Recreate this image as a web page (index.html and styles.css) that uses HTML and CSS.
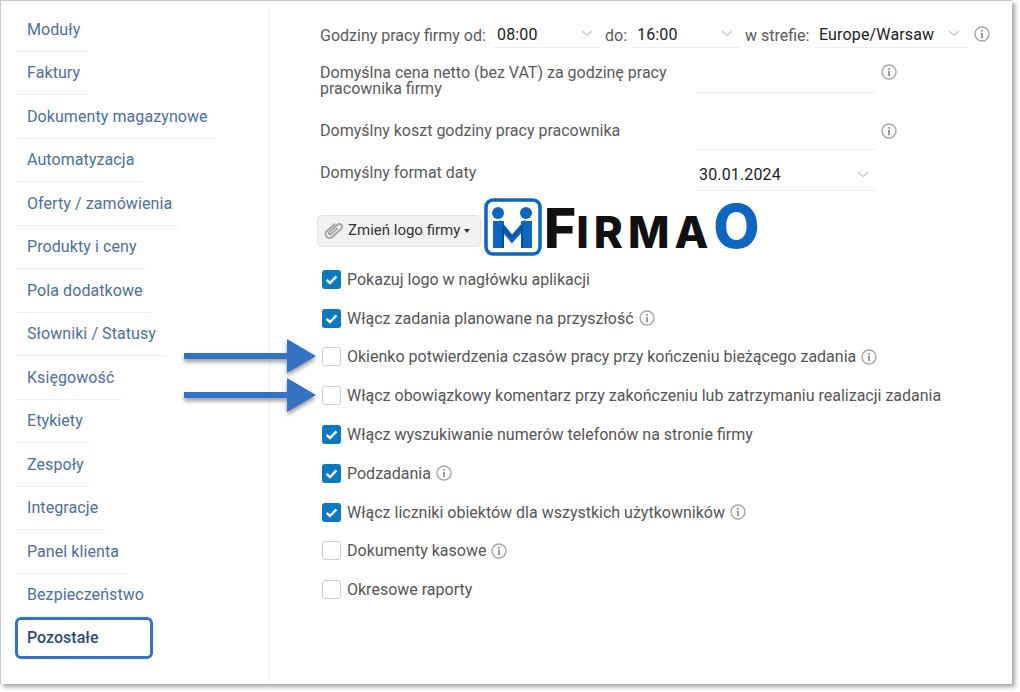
FILE: index.html
```html
<!DOCTYPE html>
<html lang="en">

<head>
	<meta charset="utf-8">
	<title>Ustawienia</title>
	<link rel="stylesheet" href="styles.css">
</head>

<body>
	<svg class="defs" width="0" height="0">
		<symbol id="info" viewBox="0 0 16 16">
			<circle cx="8" cy="8" r="7" fill="none" stroke="#a6a6a6" stroke-width="1.4" />
			<circle cx="8" cy="4.8" r="1.1" fill="#999" />
			<rect x="7" y="6.8" width="2" height="5.4" fill="#999" />
		</symbol>
		<symbol id="chevron" viewBox="0 0 12 7">
			<path d="M1 1l5 4.6L11 1" fill="none" stroke="#c4c4c4" stroke-width="1.1" />
		</symbol>
		<symbol id="tick" viewBox="0 0 19 19">
			<path d="M4.6 9.8l3.4 3.2 6.4-6.6" fill="none" stroke="#fff" stroke-width="2.4" />
		</symbol>
	</svg>

	<div class="window">
		<ul class="sidebar">
			<li><a>Moduły</a></li>
			<li><a>Faktury</a></li>
			<li><a>Dokumenty magazynowe</a></li>
			<li><a>Automatyzacja</a></li>
			<li><a>Oferty / zamówienia</a></li>
			<li><a>Produkty i ceny</a></li>
			<li><a>Pola dodatkowe</a></li>
			<li><a>Słowniki / Statusy</a></li>
			<li><a>Księgowość</a></li>
			<li><a>Etykiety</a></li>
			<li><a>Zespoły</a></li>
			<li><a>Integracje</a></li>
			<li><a>Panel klienta</a></li>
			<li><a>Bezpieczeństwo</a></li>
			<li class="active"><a>Pozostałe</a></li>
		</ul>

		<div class="content">
			<div class="hours-row">
				<span class="label">Godziny pracy firmy od:</span>
				<div class="select select-time"><span>08:00</span><svg class="chevron"><use href="#chevron" /></svg></div>
				<span class="label">do:</span>
				<div class="select select-time"><span>16:00</span><svg class="chevron"><use href="#chevron" /></svg></div>
				<span class="label">w strefie:</span>
				<div class="select select-zone"><span>Europe/Warsaw</span><svg class="chevron"><use href="#chevron" /></svg></div>
				<svg class="info info-zone"><use href="#info" /></svg>
			</div>

			<div class="field field-price">
				<span class="label field-label">Domyślna cena netto (bez VAT) za godzinę pracy pracownika firmy</span>
				<div class="input"></div>
				<svg class="info"><use href="#info" /></svg>
			</div>

			<div class="field field-cost">
				<span class="label field-label">Domyślny koszt godziny pracy pracownika</span>
				<div class="input"></div>
				<svg class="info"><use href="#info" /></svg>
			</div>

			<div class="field field-date">
				<span class="label field-label">Domyślny format daty</span>
				<div class="select select-date"><span>30.01.2024</span><svg class="chevron"><use href="#chevron" /></svg></div>
			</div>

			<div class="logo-row">
				<button class="logo-btn">
					<svg class="clip" viewBox="0 0 22 22">
						<path transform="rotate(48 11 11)" d="M7 6v11a4 4 0 0 0 8 0V5a2.800 2.800 0 0 0-5.600 0v11a1.300 1.300 0 0 0 2.600 0V7" fill="none" stroke="#a3a3a3" stroke-width="1.900" />
					</svg>
					Zmień logo firmy
					<span class="caret"></span>
				</button>
				<div class="logo">
					<svg class="logo-mark" viewBox="0 0 58 58">
						<rect x="2" y="2" width="54" height="54" rx="7" fill="#fff" stroke="#0d66c2" stroke-width="3.500" />
						<circle cx="14" cy="15" r="6" fill="#0d66c2" />
						<circle cx="42" cy="15" r="6" fill="#0d66c2" />
						<path d="M9 23h11v27H9zM37 23h11v27H37z" fill="#0d66c2" />
						<path d="M14 24l14 17 15-17" fill="none" stroke="#0d66c2" stroke-width="6" />
						<path d="M19 50V29l9 11 10-11v21" fill="none" stroke="#0a4f96" stroke-width="2" />
					</svg>
					<span class="logo-text"><span class="logo-big">F</span>IRMA<span class="logo-o">O</span></span>
				</div>
			</div>

			<ul class="checks">
				<li><span class="box on"><svg><use href="#tick" /></svg></span>Pokazuj logo w nagłówku aplikacji</li>
				<li><span class="box on"><svg><use href="#tick" /></svg></span>Włącz zadania planowane na przyszłość<svg class="info"><use href="#info" /></svg></li>
				<li><span class="box"></span>Okienko potwierdzenia czasów pracy przy kończeniu bieżącego zadania<svg class="info"><use href="#info" /></svg></li>
				<li><span class="box"></span>Włącz obowiązkowy komentarz przy zakończeniu lub zatrzymaniu realizacji zadania</li>
				<li><span class="box on"><svg><use href="#tick" /></svg></span>Włącz wyszukiwanie numerów telefonów na stronie firmy</li>
				<li><span class="box on"><svg><use href="#tick" /></svg></span>Podzadania<svg class="info"><use href="#info" /></svg></li>
				<li><span class="box on"><svg><use href="#tick" /></svg></span>Włącz liczniki obiektów dla wszystkich użytkowników<svg class="info"><use href="#info" /></svg></li>
				<li><span class="box"></span>Dokumenty kasowe<svg class="info"><use href="#info" /></svg></li>
				<li><span class="box"></span>Okresowe raporty</li>
			</ul>
		</div>

		<!-- arrows drawn over the screenshot -->
		<svg class="arrow arrow-one" viewBox="0 0 132 34"><path d="M0 14h103V0l29 17-29 17V20H0z" /></svg>
		<svg class="arrow arrow-two" viewBox="0 0 132 34"><path d="M0 14h103V0l29 17-29 17V20H0z" /></svg>
	</div>
</body>

</html>
```

FILE: styles.css
```css
/* common css */
* {
	margin: 0;
	padding: 0;
	box-sizing: border-box;
}

body {
	font-family: 'Roboto', sans-serif;
	background-color: #fff;
	width: 1020px;
	height: 692px;
	overflow: hidden;
}

ul {
	list-style: none;
}

.defs {
	position: absolute;
}

/* window frame */
.window {
	position: relative;
	display: flex;
	width: 1012px;
	height: 684px;
	background-color: #fff;
	border-top: 1px solid #c8c8c8;
	border-left: 1px solid #c8c8c8;
	box-shadow: 3px 3px 4px rgba(0, 0, 0, .35);
}

/* sidebar */
.sidebar {
	width: 269px;
	height: 675px;
	margin-top: 7px;
	padding: 0 0 0 15px;
	border-right: 1px solid #eef0f4;
}

.sidebar li {
	height: 43.5px;
}

.sidebar a {
	display: inline-block;
	height: 100%;
	padding: 11.6px 8px 0 11px;
	font-size: 16px;
	line-height: 20px;
	letter-spacing: .08px;
	color: #4a6fa5;
	border-bottom: 1px solid #eef1f7;
}

.sidebar .active a {
	width: 138px;
	height: 42px;
	margin-left: -1px;
	padding: 8px 0 0 9px;
	font-weight: 500;
	letter-spacing: 0;
	color: #2a4a80;
	border: 3px solid #3473c4;
	border-radius: 6px;
}

/* settings form */
.content {
	flex: 1;
	padding: 19px 0 0 50px;
	font-size: 16px;
	color: #555;
}

.label {
	line-height: 16px;
	color: #5a5a5a;
}

.info {
	width: 16px;
	height: 16px;
	flex: none;
}

.hours-row {
	display: flex;
	align-items: center;
	height: 28px;
}

.hours-row .label {
	padding-top: 4px;
}

.hours-row .label:first-child {
	width: 173px;
}

.hours-row .label:nth-of-type(2) {
	width: 28px;
}

.hours-row .label:nth-of-type(3) {
	width: 70px;
}

.select {
	display: flex;
	align-items: center;
	justify-content: space-between;
	height: 28px;
	padding: 0 7px 0 4px;
	color: #222;
	border-bottom: 1px solid #eee;
}

.select span {
	letter-spacing: .15px;
}

.hours-row .select span {
	padding-top: 2px;
}

.chevron {
	width: 12px;
	height: 7px;
}

.select-time {
	width: 107px;
	margin-right: 5px;
}

.select-zone {
	width: 152px;
}

.info-zone {
	margin-left: 7px;
}

.field {
	display: flex;
	align-items: flex-start;
}

.field-label {
	width: 376px;
}

.field-price {
	height: 56px;
	padding-top: 17px;
}

.field-cost {
	height: 45px;
	padding-top: 19px;
}

.field-date {
	height: 36px;
	padding-top: 16px;
}

.input {
	width: 180px;
	height: 28px;
	border-bottom: 1px solid #eee;
}

.field .info {
	margin-left: 5px;
}

.field-cost .input {
	height: 30px;
	margin-top: -3px;
}

.select-date {
	width: 180px;
	height: 30px;
	margin-top: -4px;
	padding: 0 7px 2px 3px;
}

.field-price .info {
	margin-top: -1px;
}

.field-cost .info {
	margin-top: 0;
}

/* logo row */
.logo-row {
	display: flex;
	align-items: center;
	height: 60px;
	margin: 12px 0 0 -3px;
}

.logo-btn {
	display: flex;
	align-items: center;
	width: 164px;
	height: 32px;
	margin-top: 8px;
	padding: 0 0 2px 5px;
	font-family: inherit;
	font-size: 15px;
	color: #333;
	background-color: #f1f1f1;
	border: 1px solid #e2e2e2;
	border-radius: 5px;
}

.clip {
	width: 22px;
	height: 22px;
	margin-right: 3px;
}

.caret {
	margin: 2px 0 0 4px;
	border-top: 4px solid #333;
	border-left: 3px solid transparent;
	border-right: 3px solid transparent;
}

.logo {
	display: flex;
	align-items: center;
	margin-left: 3px;
}

.logo-mark {
	width: 58px;
	height: 58px;
}

.logo-text {
	margin: 3px 0 0 2px;
	font-family: 'Inter', sans-serif;
	font-weight: 800;
	font-size: 44px;
	letter-spacing: 5px;
	line-height: 58px;
	color: #111;
}

.logo-big {
	font-size: 55px;
	letter-spacing: 0;
}

.logo-o {
	font-size: 60px;
	letter-spacing: 0;
	color: #0d66c2;
}

/* checkbox list */
.checks {
	margin-top: 3px;
}

.checks li {
	display: flex;
	align-items: center;
	height: 38.8px;
	padding-left: 2px;
}

.box {
	flex: none;
	width: 19px;
	height: 19px;
	margin-right: 6px;
	background-color: #fff;
	border: 1px solid #ccc;
	border-radius: 3px;
}

.box.on {
	background-color: #0b79bf;
	border: 0;
}

.box svg {
	display: block;
	width: 19px;
	height: 19px;
}

.checks .info {
	margin-left: 5px;
}

/* arrows */
.arrow {
	position: absolute;
	left: 183px;
	width: 132px;
	height: 34px;
	fill: #3473c4;
	filter: drop-shadow(0 3px 2px rgba(0, 0, 0, .4));
}

.arrow-one {
	top: 338px;
}

.arrow-two {
	top: 377px;
}
```
